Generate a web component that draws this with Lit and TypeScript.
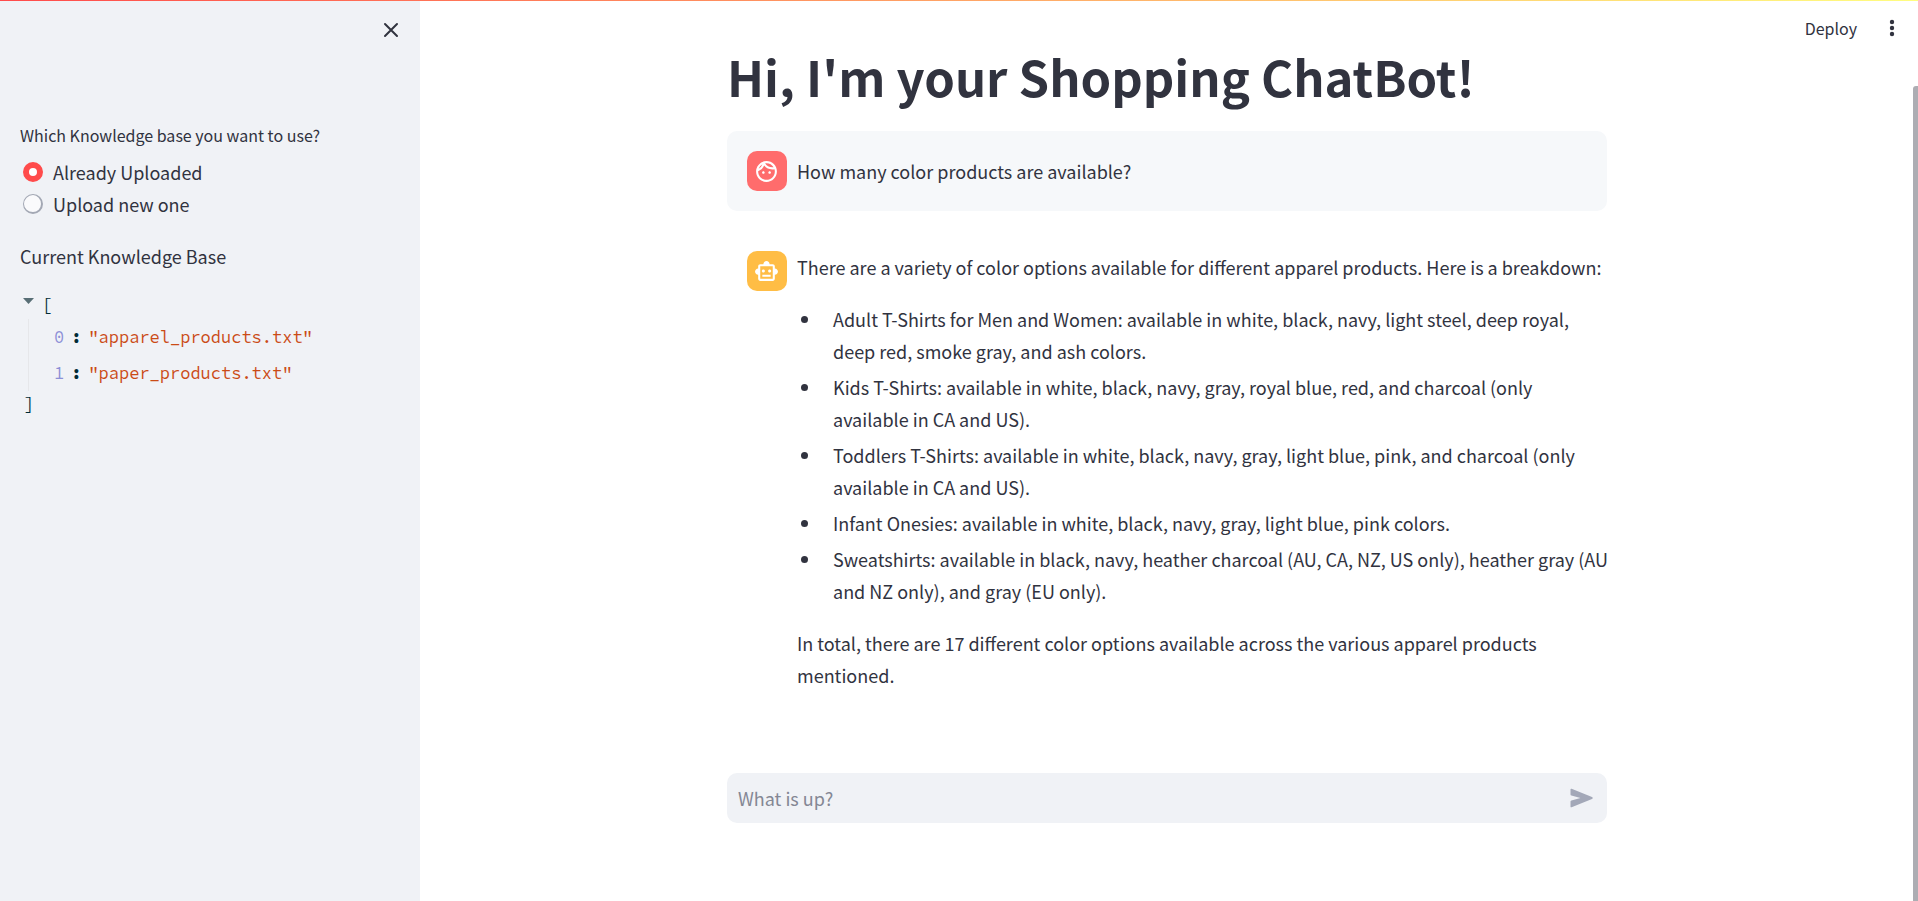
import { LitElement, html, css } from "lit";
import { customElement, state } from "lit/decorators.js";

@customElement("chat-message")
class ChatMessage extends LitElement {
  static properties = { role: { type: String, reflect: true } };

  static styles = css`
    :host {
      display: flex;
      align-items: flex-start;
      gap: 10px;
      padding: 20px;
      border-radius: 10px;
    }
    :host([role="user"]) {
      background: #f6f8fa;
      align-items: center;
    }
    .avatar {
      box-sizing: border-box;
      display: flex;
      align-items: center;
      flex: none;
      width: 40px;
      height: 40px;
      padding-left: 7px;
      border-radius: 10px;
      background: #ffbd45;
      color: #fff;
    }
    .avatar.user {
      background: #ff6c6c;
    }
    .avatar svg {
      width: 25px;
      height: 25px;
    }
    .body {
      flex: 1;
      min-width: 0;
      margin-right: -23px;
    }
  `;

  declare role: string;

  render() {
    const user = this.role === "user";
    return html`
      <div class="avatar ${user ? "user" : ""}">
        ${user
          ? html`<svg viewBox="0 0 24 24" fill="currentColor" aria-hidden="true">
              <path d="M10.25 13c0 .69-.56 1.25-1.25 1.25S7.75 13.69 7.75 13s.56-1.25 1.25-1.25 1.25.56 1.25 1.25zM15 11.75c-.69 0-1.25.56-1.25 1.25s.56 1.25 1.25 1.25 1.25-.56 1.25-1.25-.56-1.25-1.25-1.25zm7 .25c0 5.52-4.48 10-10 10S2 17.52 2 12 6.48 2 12 2s10 4.48 10 10zM10.66 4.12C12.06 6.44 14.6 8 17.5 8c.46 0 .91-.05 1.34-.12C17.44 5.56 14.9 4 12 4c-.46 0-.91.05-1.34.12zM4.42 9.47a8.046 8.046 0 003.66-4.44 8.046 8.046 0 00-3.66 4.44zM20 12c0-.78-.12-1.53-.33-2.24-.7.15-1.42.24-2.17.24a10 10 0 01-7.76-3.69A10.016 10.016 0 014 11.86c.01.04 0 .09 0 .14 0 4.41 3.59 8 8 8s8-3.59 8-8z" />
            </svg>`
          : html`<svg viewBox="0 0 24 24" fill="currentColor" aria-hidden="true">
              <path d="M20 9V7c0-1.100-.9-2-2-2h-3c0-1.660-1.340-3-3-3S9 3.340 9 5H6c-1.100 0-2 .9-2 2v2c-1.660 0-3 1.340-3 3s1.340 3 3 3v4c0 1.100.9 2 2 2h12c1.100 0 2-.9 2-2v-4c1.660 0 3-1.340 3-3s-1.340-3-3-3zm-2 10H6V7h12v12zm-9-6c-.83 0-1.500-.67-1.500-1.500S8.170 10 9 10s1.500.67 1.500 1.500S9.830 13 9 13zm7.500-1.500c0 .83-.67 1.500-1.500 1.500s-1.500-.67-1.500-1.500.67-1.500 1.500-1.500 1.500.67 1.500 1.500zM8 15h8v2H8v-2z" />
            </svg>`}
      </div>
      <div class="body"><slot></slot></div>
    `;
  }
}

const FILES = ["apparel_products.txt", "paper_products.txt"];

const SOURCES = ["Already Uploaded", "Upload new one"];

const BREAKDOWN = [
  "Adult T-Shirts for Men and Women: available in white, black, navy, light steel, deep royal, deep red, smoke gray, and ash colors.",
  "Kids T-Shirts: available in white, black, navy, gray, royal blue, red, and charcoal (only available in CA and US).",
  "Toddlers T-Shirts: available in white, black, navy, gray, light blue, pink, and charcoal (only available in CA and US).",
  "Infant Onesies: available in white, black, navy, gray, light blue, pink colors.",
  "Sweatshirts: available in black, navy, heather charcoal (AU, CA, NZ, US only), heather gray (AU and NZ only), and gray (EU only).",
];

@customElement("app-root")
class AppRoot extends LitElement {
  @state() source = SOURCES[0];
  @state() expanded = true;

  static styles = css`
    :host {
      display: block;
      position: relative;
      overflow: hidden;
      background: #fff;
      color: #31333f;
      font-family: "Source Sans Pro", "Noto Sans CJK SC", "Noto Sans", sans-serif;
      font-size: 18px;
      line-height: 32px;
    }
    * {
      box-sizing: border-box;
    }
    button {
      display: flex;
      align-items: center;
      padding: 0;
      border: 0;
      background: none;
      color: inherit;
      font: inherit;
      cursor: pointer;
    }
    p,
    ul,
    h1,
    fieldset {
      margin: 0;
      padding: 0;
      border: 0;
    }
    .decoration {
      position: absolute;
      inset: 0 0 auto;
      height: 1px;
      background: linear-gradient(90deg, #ff4b4b, #fffd80);
    }
    .layout {
      display: grid;
      grid-template-columns: 420px 1fr;
      min-height: 100vh;
    }
    .sidebar {
      background: #f0f2f6;
      padding: 19px 20px 20px;
    }
    .close {
      margin-left: auto;
      margin-right: 1px;
    }
    .close svg {
      width: 16px;
      height: 22px;
    }
    .panel {
      display: flex;
      flex-direction: column;
      gap: 20px;
      margin-top: 78px;
    }
    legend {
      padding: 0;
      font-size: 16px;
      margin-bottom: 5px;
    }
    .option {
      display: flex;
      align-items: center;
      gap: 10px;
      padding-left: 3px;
      cursor: pointer;
    }
    .option input {
      appearance: none;
      flex: none;
      width: 20px;
      height: 20px;
      margin: 0;
      border: 1px solid #a3a8b4;
      border-width: 1px 2px 2px 1px;
      border-radius: 50%;
      background: #fafafc;
    }
    .option input:checked {
      border: 6px solid #ff4b4b;
      background: #fff;
    }
    .json {
      font-family: "Source Code Pro", "Liberation Mono", monospace;
      font-size: 17px;
      line-height: 36px;
      color: #002b36;
    }
    .toggle {
      gap: 8px;
      padding-left: 3px;
      line-height: 27px;
    }
    .toggle svg {
      width: 11px;
      height: 6px;
      margin-bottom: 10px;
    }
    .entries {
      margin-left: 8px;
      padding-left: 25px;
      border-left: 1px solid #e6e7ea;
      list-style: none;
    }
    .entries li {
      display: flex;
      gap: 7px;
    }
    .index {
      color: #8c8fd6;
    }
    .value {
      color: #cb4b16;
    }
    .bracket {
      padding-left: 4px;
      line-height: 27px;
    }
    .main {
      display: flex;
      flex-direction: column;
      align-items: center;
      padding: 43px 4px 78px 0;
    }
    .column {
      display: flex;
      flex-direction: column;
      gap: 20px;
      width: 100%;
      max-width: 880px;
    }
    h1 {
      font-size: 49px;
      line-height: 66px;
      font-weight: 700;
      padding-bottom: 2px;
    }
    .answer,
    .answer ul {
      display: flex;
      flex-direction: column;
    }
    .answer {
      gap: 20px;
    }
    .answer ul {
      gap: 4px;
      list-style: none;
    }
    .answer li {
      display: flex;
      gap: 25px;
      padding-left: 4px;
    }
    .answer li::before {
      content: "";
      flex: none;
      width: 7px;
      height: 7px;
      margin-top: 13px;
      border-radius: 50%;
      background: #31333f;
    }
    .composer {
      display: flex;
      align-items: center;
      width: 100%;
      max-width: 880px;
      height: 50px;
      margin-top: auto;
      padding: 0 14px 0 11px;
      border-radius: 10px;
      background: #f0f2f6;
    }
    .composer input {
      flex: 1;
      min-width: 0;
      height: 32px;
      padding: 0;
      border: 0;
      outline: 0;
      background: none;
      color: inherit;
      font: inherit;
    }
    .composer input::placeholder {
      color: #848794;
      opacity: 1;
    }
    .composer svg {
      width: 23px;
      height: 20px;
    }
    .toolbar {
      position: absolute;
      top: 12px;
      right: 23px;
      display: flex;
      align-items: center;
      gap: 32px;
      font-size: 16px;
    }
    .toolbar svg {
      width: 6px;
      height: 18px;
    }
    .thumb {
      position: absolute;
      top: 86px;
      right: 0;
      bottom: 0;
      width: 5px;
      border-radius: 3px 0 0 0;
      background: #adadb3;
    }
  `;

  render() {
    return html`
      <div class="layout">
        <aside class="sidebar">
          <button class="close" aria-label="Close sidebar">
            <svg viewBox="0 0 16 22" fill="none" stroke="currentColor" stroke-width="2" stroke-linecap="round">
              <path d="M2 5l12 12M14 5L2 17" />
            </svg>
          </button>
          <div class="panel">
            <fieldset>
              <legend>Which Knowledge base you want to use?</legend>
              ${SOURCES.map(
                (name) => html`<label class="option">
                  <input
                    type="radio"
                    name="source"
                    .checked=${this.source === name}
                    @change=${() => (this.source = name)}
                  />
                  ${name}
                </label>`
              )}
            </fieldset>
            <p>Current Knowledge Base</p>
            <div class="json">
              <button
                class="toggle"
                aria-expanded=${this.expanded}
                @click=${() => (this.expanded = !this.expanded)}
              >
                <svg viewBox="0 0 11 6" fill="#586e75" aria-hidden="true"><path d="M0 0h11L5.500 6z" /></svg>[
              </button>
              ${this.expanded
                ? html`<ul class="entries">
                    ${FILES.map(
                      (file, i) => html`<li>
                        <span class="index">${i}</span><b>:</b><span class="value">"${file}"</span>
                      </li>`
                    )}
                  </ul>`
                : null}
              <div class="bracket">]</div>
            </div>
          </div>
        </aside>
        <main class="main">
          <div class="column">
            <h1>Hi, I'm your Shopping ChatBot!</h1>
            <chat-message role="user">How many color products are available?</chat-message>
            <chat-message role="assistant">
              <div class="answer">
                <p>
                  There are a variety of color options available for different apparel products. Here is a
                  breakdown:
                </p>
                <ul>
                  ${BREAKDOWN.map((line) => html`<li><span>${line}</span></li>`)}
                </ul>
                <p>
                  In total, there are 17 different color options available across the various apparel products
                  mentioned.
                </p>
              </div>
            </chat-message>
          </div>
          <form class="composer" @submit=${(e: Event) => e.preventDefault()}>
            <input type="text" placeholder="What is up?" aria-label="Message" />
            <button aria-label="Send">
              <svg viewBox="0 0 23 20" fill="#a3a8b8">
                <path d="M.5 1.500Q.5.400 1.600.700L22 9.100Q23.500 10 22 10.900L1.600 19.300Q.5 19.600.5 18.500V13.500Q.5 12.600 1.400 12.400L10.500 10 1.400 7.600Q.5 7.400.5 6.500z" />
              </svg>
            </button>
          </form>
        </main>
      </div>
      <div class="toolbar">
        <button>Deploy</button>
        <button aria-label="Main menu">
          <svg viewBox="0 0 6 18" fill="currentColor">
            <circle cx="3" cy="3" r="2.200" />
            <circle cx="3" cy="9" r="2.200" />
            <circle cx="3" cy="15" r="2.200" />
          </svg>
        </button>
      </div>
      <div class="thumb"></div>
      <div class="decoration"></div>
    `;
  }
}
